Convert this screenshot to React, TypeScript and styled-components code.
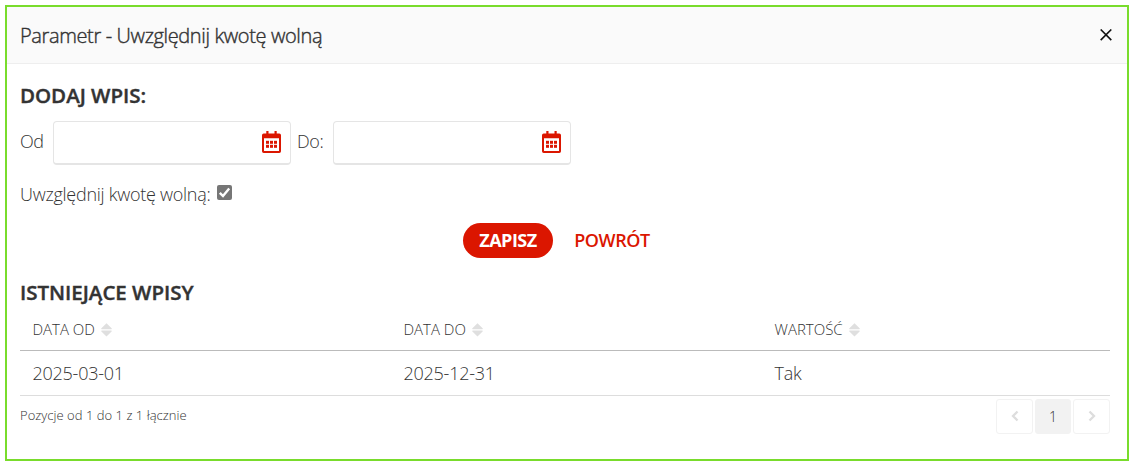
import React from 'react';
import styled, { createGlobalStyle } from 'styled-components';

const GlobalStyle = createGlobalStyle`
  * { box-sizing: border-box; }
  body {
    margin: 0;
    background: #fff;
    color: #333;
    font-family: "Open Sans", sans-serif;
    font-weight: 300;
    font-size: 18px;
  }
  button, input { font-family: inherit; }
`;

const Dialog = styled.section`
  width: 1124px;
  height: 456px;
  margin: 5px 0 0 5px;
  border: 2px solid #79dc2c;
  background: #fff;
`;

const Header = styled.header`
  display: flex;
  align-items: center;
  justify-content: space-between;
  height: 57px;
  padding: 0 15px 0 13px;
  background: #fafafa;
  border-bottom: 1px solid #eee;
`;

const Title = styled.h1`
  margin: 0;
  padding-top: 2px;
  font-size: 20px;
  line-height: 28px;
  font-weight: 300;
  letter-spacing: -0.37px;
  -webkit-text-stroke: 0.4px #333;
`;

const CloseButton = styled.button`
  display: flex;
  padding: 0;
  border: 0;
  background: none;
`;

const Body = styled.div`
  padding: 18px 17px 0 13px;
`;

const Heading = styled.h2`
  margin: 0;
  padding-bottom: 2px;
  font-size: 20.5px;
  line-height: 26px;
  font-weight: 600;
  letter-spacing: -0.02px;
  -webkit-text-stroke: 0.4px #333;
`;

const DateRow = styled.div`
  display: flex;
  align-items: center;
  margin-top: 11px;
  height: 44px;
`;

const DateLabel = styled.label<{ $width: number }>`
  width: ${(p) => p.$width}px;
  line-height: 24px;
  letter-spacing: -0.4px;
  padding-bottom: 4px;
`;

const DateField = styled.div`
  display: flex;
  align-items: center;
  justify-content: flex-end;
  width: 238px;
  height: 44px;
  margin-right: 6px;
  padding: 0 9px 2px 0;
  border: 1px solid #e5e5e5;
  border-bottom-width: 2px;
  border-radius: 4px;
`;

const CheckRow = styled.label`
  display: flex;
  align-items: center;
  height: 24px;
  margin-top: 17px;
  letter-spacing: -0.27px;
`;

const CheckText = styled.span`
  width: 197px;
  white-space: nowrap;
`;

const Checkbox = styled.span`
  display: flex;
  margin-bottom: 3px;
`;

const Actions = styled.div`
  display: flex;
  height: 35px;
  margin-top: 17px;
  padding-left: 443px;
`;

const Button = styled.button<{ $primary?: boolean }>`
  width: ${(p) => (p.$primary ? 90 : 118)}px;
  height: 35px;
  padding: 0;
  border: 0;
  border-radius: 18px;
  font-size: 18px;
  line-height: 35px;
  font-weight: ${(p) => (p.$primary ? 700 : 600)};
  letter-spacing: ${(p) => (p.$primary ? -0.5 : -0.4)}px;
  color: ${(p) => (p.$primary ? '#fff' : '#db1600')};
  background: ${(p) => (p.$primary ? '#db1600' : 'transparent')};
`;

const ListHeading = styled(Heading)`
  margin-top: 21px;
`;

const Table = styled.table`
  width: 1090px;
  border-collapse: separate;
  border-spacing: 0;
  table-layout: fixed;
`;

const HeadCell = styled.th<{ $width: number }>`
  width: ${(p) => p.$width}px;
  height: 44px;
  padding: 0 0 0 12.5px;
  border-bottom: 1px solid #bbb;
  text-align: left;
  font-weight: 300;
  font-size: 15px;
`;

const HeadContent = styled.span`
  display: flex;
  align-items: center;
  gap: 6px;

  svg { margin-top: 3px; }
`;

const Cell = styled.td`
  height: 45px;
  padding: 0 0 0 12.5px;
  border-bottom: 1px solid #ddd;
  letter-spacing: -0.25px;
`;

const Footer = styled.footer`
  display: flex;
  justify-content: space-between;
  padding-top: 3px;
`;

const Summary = styled.div`
  padding-top: 6px;
  font-size: 13px;
  line-height: 20px;
  letter-spacing: 0.03px;
`;

const Pager = styled.nav`
  display: flex;
  gap: 2px;
`;

const PageButton = styled.button<{ $current?: boolean }>`
  display: flex;
  align-items: center;
  justify-content: center;
  width: ${(p) => (p.$current ? 36 : 37)}px;
  height: 35px;
  padding: 0 0 1px;
  border: 1px solid #f2f2f2;
  border-radius: 3px;
  font-size: 14px;
  font-weight: 300;
  color: #333;
  background: ${(p) => (p.$current ? '#f2f2f2' : '#fff')};
`;

const CalendarIcon = () => (
  <svg width="19" height="22" viewBox="0 0 19 22" fill="#db1600">
    <path
      fillRule="evenodd"
      d="M4.3 0h2.2v2.5h6V0h2.2v2.5h2.6A1.7 1.7 0 0 1 19 4.2v16.1a1.7 1.7 0 0 1-1.7 1.7H1.7A1.7 1.7 0 0 1 0 20.3V4.2a1.7 1.7 0 0 1 1.7-1.7h2.6zM2 7.2V20h15V7.2z"
    />
    {[4, 8, 12].map((x) =>
      [9.8, 13.8].map((y) => <rect key={`${x}-${y}`} x={x} y={y} width="3" height="3" />),
    )}
  </svg>
);

const SortIcon = () => (
  <svg width="11" height="14" viewBox="0 0 11 14" fill="#dfdfdf">
    <path d="M5.5 0.2 10.6 5.2Q11.2 6.2 10.3 6.2H.7Q-.2 6.2 .4 5.2zM5.5 13.6 10.6 8.6Q11.2 7.6 10.3 7.6H.7Q-.2 7.6 .4 8.6z" />
  </svg>
);

const Arrow = ({ d }: { d: string }) => (
  <svg width="8" height="12" viewBox="0 0 8 12" fill="none" stroke="#ddd" strokeWidth="2.3">
    <path d={d} />
  </svg>
);

const columns = [
  { label: 'DATA OD', value: '2025-03-01', width: 371 },
  { label: 'DATA DO', value: '2025-12-31', width: 371 },
  { label: 'WARTOŚĆ', value: 'Tak', width: 348 },
];

export default function App() {
  return (
    <>
      <GlobalStyle />
      <Dialog>
        <Header>
          <Title>Parametr - Uwzględnij kwotę wolną</Title>
          <CloseButton aria-label="Zamknij">
            <svg width="12" height="12" viewBox="0 0 12 12" stroke="#111" strokeWidth="1.6">
              <path d="M.7.5l10.6 10.6M11.3.5L.7 11.1" />
            </svg>
          </CloseButton>
        </Header>
        <Body>
          <Heading>DODAJ WPIS:</Heading>
          <DateRow>
            <DateLabel $width={33}>Od</DateLabel>
            <DateField><CalendarIcon /></DateField>
            <DateLabel $width={36}>Do:</DateLabel>
            <DateField><CalendarIcon /></DateField>
          </DateRow>
          <CheckRow>
            <CheckText>Uwzględnij kwotę wolną:</CheckText>
            <Checkbox role="checkbox" aria-checked="true">
              <svg width="15" height="15" viewBox="0 0 15 15">
                <rect width="15" height="15" rx="2" fill="#767676" />
                <path d="M2.8 7.8l3.2 3.2L12.2 3.5" fill="none" stroke="#fff" strokeWidth="2.4" />
              </svg>
            </Checkbox>
          </CheckRow>
          <Actions>
            <Button $primary>ZAPISZ</Button>
            <Button>POWRÓT</Button>
          </Actions>
          <ListHeading>ISTNIEJĄCE WPISY</ListHeading>
          <Table>
            <thead>
              <tr>
                {columns.map((c) => (
                  <HeadCell key={c.label} $width={c.width}>
                    <HeadContent>{c.label}<SortIcon /></HeadContent>
                  </HeadCell>
                ))}
              </tr>
            </thead>
            <tbody>
              <tr>{columns.map((c) => <Cell key={c.label}>{c.value}</Cell>)}</tr>
            </tbody>
          </Table>
          <Footer>
            <Summary>Pozycje od 1 do 1 z 1 łącznie</Summary>
            <Pager>
              <PageButton aria-label="Poprzednia"><Arrow d="M6.5 1.5L2 6l4.5 4.5" /></PageButton>
              <PageButton $current>1</PageButton>
              <PageButton aria-label="Następna"><Arrow d="M1.5 1.5L6 6l-4.5 4.5" /></PageButton>
            </Pager>
          </Footer>
        </Body>
      </Dialog>
    </>
  );
}
